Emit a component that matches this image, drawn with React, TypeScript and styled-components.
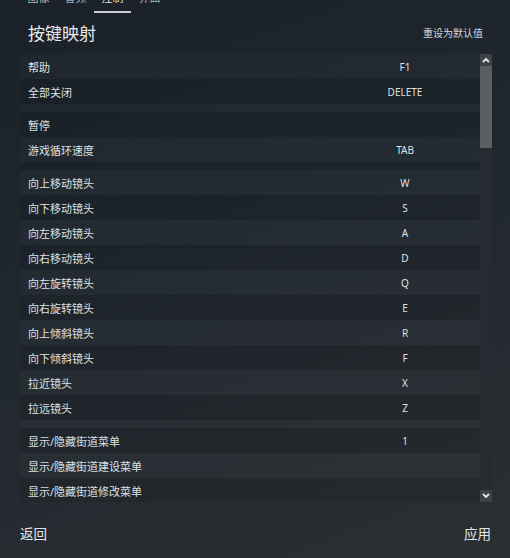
import React from "react";
import styled, { createGlobalStyle } from "styled-components";

// Settings > controls > key mapping panel

type Item = { label: string; key?: string } | null;

const tabs = ["图像", "音频", "控制", "界面"];

// null = small spacer between groups (it still takes a stripe slot)
const items: Item[] = [
  { label: "帮助", key: "F1" },
  { label: "全部关闭", key: "DELETE" },
  null,
  { label: "暂停" },
  { label: "游戏循环速度", key: "TAB" },
  null,
  { label: "向上移动镜头", key: "W" },
  { label: "向下移动镜头", key: "S" },
  { label: "向左移动镜头", key: "A" },
  { label: "向右移动镜头", key: "D" },
  { label: "向左旋转镜头", key: "Q" },
  { label: "向右旋转镜头", key: "E" },
  { label: "向上倾斜镜头", key: "R" },
  { label: "向下倾斜镜头", key: "F" },
  { label: "拉近镜头", key: "X" },
  { label: "拉远镜头", key: "Z" },
  null,
  { label: "显示/隐藏街道菜单", key: "1" },
  { label: "显示/隐藏街道建设菜单" },
  { label: "显示/隐藏街道修改菜单" },
];

const App: React.FC = () => {
  return (
    <Screen>
      <GlobalStyle />
      <TabBar>
        {tabs.map((t, i) => (
          <Tab key={t} $active={i === 2}>
            {t}
          </Tab>
        ))}
      </TabBar>

      <Header>
        <Title>按键映射</Title>
        <ResetLink>重设为默认值</ResetLink>
      </Header>

      <ListArea>
        <Rows>
          {items.map((it, i) =>
            it ? (
              <Row key={i} $light={i % 2 === 0}>
                <Label>{it.label}</Label>
                <KeyCell>{it.key ?? ""}</KeyCell>
              </Row>
            ) : (
              <Spacer key={i} $light={i % 2 === 0} />
            )
          )}
        </Rows>
        <ScrollBar>
          <ScrollBtn>
            <svg width="8" height="6" viewBox="0 0 8 6">
              <polyline points="1,5 4,2 7,5" fill="none" stroke="#e6e8ea" strokeWidth="1.8" />
            </svg>
          </ScrollBtn>
          <Thumb />
          <Track />
          <ScrollBtn>
            <svg width="8" height="6" viewBox="0 0 8 6">
              <polyline points="1,1 4,4 7,1" fill="none" stroke="#e6e8ea" strokeWidth="1.8" />
            </svg>
          </ScrollBtn>
        </ScrollBar>
      </ListArea>

      <Footer>
        <FooterBtn>返回</FooterBtn>
        <FooterBtn>应用</FooterBtn>
      </Footer>
    </Screen>
  );
};

export default App;

const GlobalStyle = createGlobalStyle`
  html, body {
    margin: 0;
    padding: 0;
    background: #1e252b;
  }
  * {
    box-sizing: border-box;
  }
`;

const Screen = styled.div`
  width: 510px;
  height: 558px;
  overflow: hidden;
  display: flex;
  flex-direction: column;
  background: linear-gradient(160deg, #1a2129 0%, #20272e 45%, #2a2f32 100%);
  color: #dde1e4;
  font-family: "Noto Sans", "Noto Sans CJK SC", sans-serif;
`;

const TabBar = styled.div`
  display: flex;
  margin-top: -11px;
  padding-left: 20px;
  height: 24px;
`;

const Tab = styled.div<{ $active: boolean }>`
  width: 37px;
  height: 24px;
  line-height: 18px;
  font-size: 11px;
  text-align: center;
  color: ${({ $active }) => ($active ? "#e2e5e8" : "#aeb3b7")};
  border-bottom: 2px solid ${({ $active }) => ($active ? "#c9cdd1" : "transparent")};
`;

const Header = styled.div`
  height: 40px;
  display: flex;
  align-items: center;
  justify-content: space-between;
  padding: 0 27px 2px 28px;
`;

const Title = styled.div`
  font-size: 17px;
  color: #e8ebed;
`;

const ResetLink = styled.div`
  font-size: 10px;
  color: #d4d8db;
`;

const ListArea = styled.div`
  display: flex;
  height: 448px;
  margin: 1px 18px 0 20px;
`;

const Rows = styled.div`
  flex: 1;
  overflow: hidden;
`;

const Row = styled.div<{ $light: boolean }>`
  display: grid;
  grid-template-columns: 1fr 150px;
  align-items: center;
  height: 25px;
  font-size: 11px;
  background: ${({ $light }) => ($light ? "rgba(255,255,255,0.02)" : "rgba(0,0,0,0.075)")};
`;

const Spacer = styled.div<{ $light: boolean }>`
  height: 8px;
  background: ${({ $light }) => ($light ? "rgba(255,255,255,0.02)" : "rgba(0,0,0,0.075)")};
`;

const Label = styled.div`
  padding-left: 8px;
  color: #dde1e4;
`;

const KeyCell = styled.div`
  text-align: center;
  color: #dde1e4;
  font-size: 10px;
`;

const ScrollBar = styled.div`
  width: 12px;
  display: flex;
  flex-direction: column;
`;

const ScrollBtn = styled.div`
  width: 12px;
  height: 12px;
  flex-shrink: 0;
  display: flex;
  align-items: center;
  justify-content: center;
  background: #3c4247;
`;

const Thumb = styled.div`
  height: 82px;
  flex-shrink: 0;
  background: #5a5f62;
`;

const Track = styled.div`
  flex: 1;
  background: #252b30;
`;

const Footer = styled.div`
  flex: 1;
  display: flex;
  align-items: center;
  justify-content: space-between;
  padding: 6px 19px 0 20px;
`;

const FooterBtn = styled.div`
  font-size: 13.5px;
  color: #e4e7ea;
`;
